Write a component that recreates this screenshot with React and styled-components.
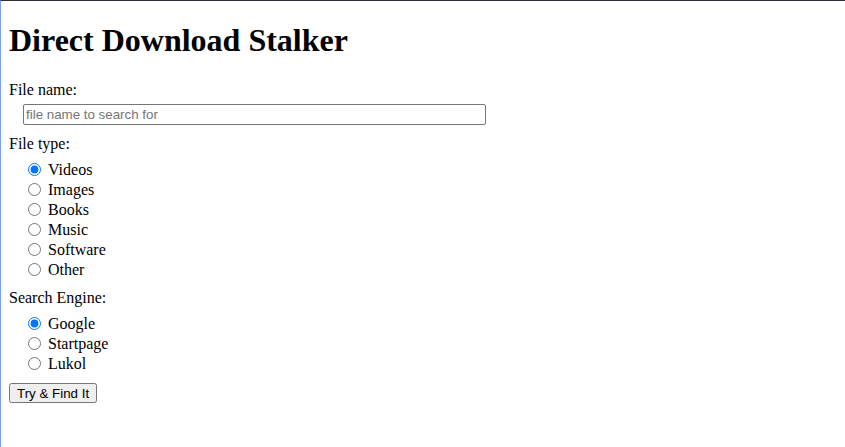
import React from 'react';
import styled, { createGlobalStyle } from 'styled-components';

const GlobalStyle = createGlobalStyle`
  html {
    box-sizing: border-box;
    min-height: 100vh;
    border-top: 1px solid #2b2f3a;
    border-left: 1px solid #7ba0f0;
    background: #fff;
  }
  body {
    margin: 8px;
    font-family: "Liberation Serif", "Times New Roman", serif;
    font-size: 16px;
    color: #000;
  }
`

const Title = styled.h1`
  font-size: 32px;
  font-weight: bold;
  margin: 13px 0 22px 0;
  line-height: 37px;
`

const Section = styled.div`
  margin-bottom: ${p => p.gap || 9}px;
`

const FieldLabel = styled.div`
  height: 18px;
  line-height: 18px;
  margin-bottom: ${p => p.gap || 7}px;
`

const Indent = styled.div`
  padding-left: 14px;
  display: flex;
  flex-direction: column;
`

const SearchInput = styled.input`
  box-sizing: border-box;
  width: 463px;
  height: 21px;
  font-family: "Liberation Sans", Arial, sans-serif;
  font-size: 13.33px;
  padding: 1px 2px;
  border: 1px solid #767676;
  border-radius: 2px;
  margin: 0;

  &::placeholder {
    color: #757575;
  }
`

const RadioRow = styled.label`
  display: flex;
  align-items: center;
  height: 20px;
  line-height: 20px;
`

const Radio = styled.input`
  width: 13px;
  height: 13px;
  margin: 0 7px 2px 5px;
`

const SubmitButton = styled.button`
  font-family: "Liberation Sans", Arial, sans-serif;
  font-size: 13.33px;
  height: 20px;
  padding: 1px 6px;
  margin: 0;
`

const Options = ({ name, items, checked }) => (
  <Indent>
    {items.map(item => (
      <RadioRow key={item}>
        <Radio type="radio" name={name} value={item} defaultChecked={item === checked} />
        {item}
      </RadioRow>
    ))}
  </Indent>
)

const App = () => {
  return (
    <>
      <GlobalStyle />
      <Title>Direct Download Stalker</Title>
      <Section gap={10}>
        <FieldLabel gap={5}>File name:</FieldLabel>
        <Indent>
          <SearchInput placeholder="file name to search for" />
        </Indent>
      </Section>
      <Section gap={9}>
        <FieldLabel>File type:</FieldLabel>
        <Options
          name="type"
          checked="Videos"
          items={['Videos', 'Images', 'Books', 'Music', 'Software', 'Other']}
        />
      </Section>
      <Section gap={9}>
        <FieldLabel>Search Engine:</FieldLabel>
        <Options name="engine" checked="Google" items={['Google', 'Startpage', 'Lukol']} />
      </Section>
      <SubmitButton>Try &amp; Find It</SubmitButton>
    </>
  );
}

export default App;
